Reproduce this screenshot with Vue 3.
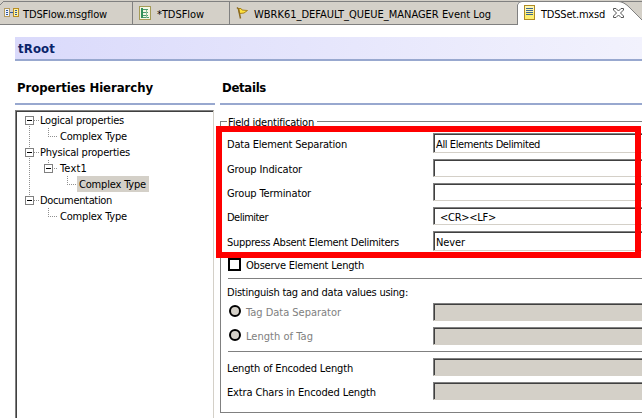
<script setup>
const tree = [
  { text: 'Logical properties', w: 84, level: 0, box: true },
  { text: 'Complex Type', w: 67, level: 1 },
  { text: 'Physical properties', w: 90, level: 0, box: true },
  { text: 'Text1', w: 27, level: 1, box: true },
  { text: 'Complex Type', w: 67, level: 2, selected: true },
  { text: 'Documentation', w: 72, level: 0, box: true, last: true },
  { text: 'Complex Type', w: 67, level: 1, after: true },
]
const fields = [
  { label: 'Data Element Separation', w: 120, value: 'All Elements Delimited', vw: 104, tall: true },
  { label: 'Group Indicator', w: 75 },
  { label: 'Group Terminator', w: 84 },
  { label: 'Delimiter', w: 41, value: '<CR><LF>', vw: 56, indent: true },
  { label: 'Suppress Absent Element Delimiters', w: 172, value: 'Never', vw: 29, tall: true },
]
const radios = [
  { label: 'Tag Data Separator', w: 95 },
  { label: 'Length of Tag', w: 67 },
]
const lengths = [
  { label: 'Length of Encoded Length', w: 126 },
  { label: 'Extra Chars in Encoded Length', w: 149 },
]
// Spreads a label's letters so that it takes the given width
const vFit = {
  mounted(el, { value }) {
    const extra = value - el.getBoundingClientRect().width
    el.style.letterSpacing = extra / el.textContent.length + 'px'
  },
}
</script>

<template>
  <div class="editor">
    <nav class="tabs">
      <div class="tab first">
        <svg class="curve" width="6" height="6" shape-rendering="crispEdges"><path d="M0 0H6V2H4V3H2V4H1V6H0Z" fill="#d4d0c8" /><path d="M0 4.500H1M1 3.500H2M2 2.500H3M3 1.500H6" stroke="#808080" fill="none" /></svg>
        <svg class="icon" width="15" height="10" shape-rendering="crispEdges">
          <rect x=".5" y=".5" width="5" height="8" fill="#eef4ff" stroke="#b59a5c" />
          <rect x="9.5" y=".5" width="5" height="8" fill="#fff3a0" stroke="#b98d22" />
          <path d="M2 2.5H4M2 4.5H4M2 6.5H4M6 4.5H9M11 2.5H13M11 4.5H13M11 6.5H13" stroke="#30599c" />
        </svg>
        <span v-fit="84">TDSFlow.msgflow</span>
      </div>
      <div class="tab second">
        <svg class="icon" width="12" height="14" shape-rendering="crispEdges">
          <rect x=".5" y=".5" width="11" height="13" fill="#f5f8e4" stroke="#a59b56" />
          <path d="M2 2H4V12H2Z" fill="#33915a" />
          <path d="M4 3.5H9M4 6.5H9M4 9.5H9M4 11.5H10" stroke="#4c9b70" />
          <path d="M7.500 4V12" stroke="#8abd98" />
        </svg>
        <span v-fit="47">*TDSFlow</span>
      </div>
      <div class="tab third">
        <svg class="icon" width="13" height="12">
          <path d="M2.500 1.500L5 1.500L6 3L11.500 3.500L8 6L3.500 6.500Z" fill="#ffe23c" stroke="#a98420" />
          <path d="M1 .5L2.500 2L4.500 11.500" stroke="#8b6a20" stroke-width="1.500" fill="none" />
        </svg>
        <span v-fit="237">WBRK61_DEFAULT_QUEUE_MANAGER Event Log</span>
      </div>
      <div class="tab active">
        <svg class="shape" width="125" height="25">
          <path d="M0 25V5Q0 1.500 5 1.500H101Q107 1.500 113 8L125 20V25Z" fill="#fff" />
          <path d="M.5 25V5Q1 1.500 5 1.500H101Q107 1.500 113 8L125 20" fill="none" stroke="#808080" />
        </svg>
        <svg class="icon" width="11" height="15" shape-rendering="crispEdges">
          <rect x=".5" y=".5" width="10" height="14" fill="#fff071" stroke="#b08b25" />
          <rect x="1" y="1" width="9" height="6" fill="#fff7b0" />
          <path d="M2 3.500H9M2 5.500H9M2 7.500H9M2 9.500H9" stroke="#3c6795" />
        </svg>
        <span v-fit="64">TDSSet.mxsd</span>
        <svg class="close" width="11" height="10"><path d="M.5 .5H3L5.500 3L8 .5H10.500V2L7.500 5L10.500 8V9.500H8L5.500 7L3 9.500H.5V8L3.500 5L.5 2Z" fill="#fff" stroke="#555" /></svg>
      </div>
    </nav>

    <header class="title"><span v-fit="37">tRoot</span></header>

    <main class="body">
      <section class="hierarchy">
        <h2><span v-fit="136">Properties Hierarchy</span></h2>
        <ul class="tree">
          <li v-for="(n, i) in tree" :key="i" :class="['node', 'level' + n.level, { box: n.box, top: i === 0, last: n.last, after: n.after }]">
            <span class="trunk"></span>
            <span class="branch"><svg v-if="n.box" class="toggle" width="9" height="9" shape-rendering="crispEdges"><rect x=".5" y=".5" width="8" height="8" fill="#fff" stroke="#808080" /><path d="M2 4.500H7" stroke="#000" /></svg></span>
            <span :class="['name', { selected: n.selected }]"><span v-fit="n.w">{{ n.text }}</span></span>
          </li>
        </ul>
      </section>

      <section class="details">
        <h2><span v-fit="44">Details</span></h2>
        <div class="group">
          <div class="legend"><span v-fit="86">Field identification</span></div>
          <div class="rows">
            <div v-for="f in fields" :key="f.label" :class="['row', { tall: f.tall }]">
              <label><span v-fit="f.w">{{ f.label }}</span></label>
              <div :class="['input', { indent: f.indent }]"><span v-if="f.value" v-fit="f.vw">{{ f.value }}</span></div>
            </div>
          </div>
          <div class="check"><i class="checkbox"></i><span v-fit="118">Observe Element Length</span></div>
          <hr>
          <div class="using"><span v-fit="181">Distinguish tag and data values using:</span></div>
          <div class="rows disabled">
            <div v-for="f in radios" :key="f.label" class="row">
              <label class="radio"><i></i><span v-fit="f.w">{{ f.label }}</span></label>
              <div class="input"></div>
            </div>
          </div>
          <hr>
          <div class="rows disabled lengths">
            <div v-for="f in lengths" :key="f.label" class="row">
              <label><span v-fit="f.w">{{ f.label }}</span></label>
              <div class="input"></div>
            </div>
          </div>
          <div class="highlight"></div>
        </div>
      </section>
    </main>
  </div>
</template>

<style>
body { margin: 0; background: #fff; overflow: hidden; }
</style>

<style scoped>
* { box-sizing: border-box; }
.editor {
  width: 642px; height: 418px; overflow: hidden; background: #fff; color: #000;
  font-family: "DejaVu Sans Condensed", "DejaVu Sans", sans-serif;
  font-stretch: condensed; font-size: 11px; line-height: 16px; white-space: nowrap;
}
svg { display: block; flex: none; }
.tabs { display: flex; height: 25px; background: #d4d0c8; padding-top: 1px; }
.tab { position: relative; display: flex; height: 24px; border-top: 1px solid #808080; border-bottom: 1px solid #808080; flex: none; }
.tab > span { padding-top: 5px; position: relative; }
.tab .icon { position: relative; }
.first { width: 133px; border-right: 1px solid #808080; padding-left: 4px; }
.first .icon { margin: 6px 4px 0 0; }
.curve { position: absolute; left: 0; top: -2px; }
.second { width: 97px; border-right: 1px solid #808080; padding-left: 6px; }
.second .icon { margin: 4px 6px 0 0; }
.third { width: 287px; padding-left: 6px; }
.third .icon { margin: 5px 5px 0 0; }
.active { width: 125px; padding-left: 7px; border-bottom: 0; }
.active .icon { margin: 3px 6px 0 0; }
.shape { position: absolute; left: 0; top: -2px; }
.close { position: relative; margin: 6px 0 0 8px; }
.title {
  margin: 12px 0 0 15px; height: 24px; padding: 4px 0 0 3px;
  background: linear-gradient(90deg, #dadafb, #f2f2fd); border-bottom: 2px solid #98a8cf;
  color: #0a246a; font-weight: bold; font-size: 13px;
}
.body { display: flex; gap: 5px; padding-left: 15px; }
.hierarchy { width: 200px; flex: none; }
.details { flex: 1; min-width: 0; }
h2 { margin: 0; height: 44px; padding: 19px 0 0 2px; font-size: 13px; line-height: 16px; border-bottom: 2px solid #98a8cf; }
.tree {
  list-style: none; margin: 5px 0 0; padding: 1px 0 0 8px; width: 199px; height: 320px;
  border: 1px solid #808080; border-right-color: #d4d0c8; box-shadow: inset 1px 1px #404040;
}
.node { display: flex; height: 16px; }
.trunk { width: 1px; margin-left: 5px; background: repeating-linear-gradient(#909090 0 1px, transparent 1px 2px); flex: none; }
.top .trunk { margin-top: 8px; }
.last .trunk { height: 8px; }
.after .trunk { background: none; }
.branch { position: relative; width: 9px; height: 1px; margin-top: 8px; background: repeating-linear-gradient(90deg, #909090 0 1px, transparent 1px 2px); flex: none; }
.branch::before { content: ""; position: absolute; left: 0; top: -8px; width: 1px; height: 8px; background: repeating-linear-gradient(#909090 0 1px, transparent 1px 2px); }
.level0 .branch::before { display: none; }
.level1 .branch { margin-left: 18px; }
.level2 .branch { margin-left: 37px; }
.toggle { position: absolute; left: -4px; top: -4px; }
.level0 .toggle { left: -5px; }
.name { height: 16px; padding: 1px 3px 0 2px; }
.level0 .name { padding-left: 1px; }
.name.selected { background: #d4d0c8; margin-left: 1px; }
.level1 .name { padding-left: 3px; }
.group { position: relative; margin-top: 16px; height: 292px; border: 1px solid #808080; border-right: 0; padding-left: 7px; }
.legend { height: 11px; margin-top: -8px; line-height: 18px; }
.legend span { background: #fff; box-shadow: -1px 0 #fff, 3px 0 #fff; }
.rows { display: flex; flex-direction: column; gap: 6px; padding-top: 8px; }
.row { display: flex; height: 18px; align-items: center; }
.row.tall { height: 20px; }
label { width: 206px; margin-left: -1px; padding-top: 3px; flex: none; }
.input { flex: 1; height: 100%; display: flex; align-items: center; padding: 3px 0 0 2px; border: 1px solid #808080; border-right: 0; border-bottom-color: #d4d0c8; box-shadow: inset 1px 1px #404040; }
.input.indent { padding-left: 6px; }
.check { display: flex; height: 13px; margin-top: 7px; align-items: center; gap: 5px; }
.check span { padding-top: 3px; }
.checkbox { width: 13px; height: 13px; border: 2px solid #000; }
hr { margin: 7px 0 0; border: 0; height: 1px; background: #808080; }
.using { height: 24px; padding-top: 6px; margin-left: -1px; }
.rows.disabled { padding-top: 0; }
.disabled .input { background: #d4d0c8; }
.rows.lengths { padding-top: 6px; }
.rows + hr { margin-top: 6px; }
.radio { display: flex; align-items: center; gap: 5px; color: #808080; padding: 2px 0 0; }
.radio i { width: 12px; height: 12px; margin-left: 2px; margin-top: -4px; border: 2px solid #000; border-radius: 50%; background: #d4d0c8; }
.highlight { position: absolute; left: -5px; top: 4px; width: 425px; height: 132px; border: 6px solid #f00; }
</style>
